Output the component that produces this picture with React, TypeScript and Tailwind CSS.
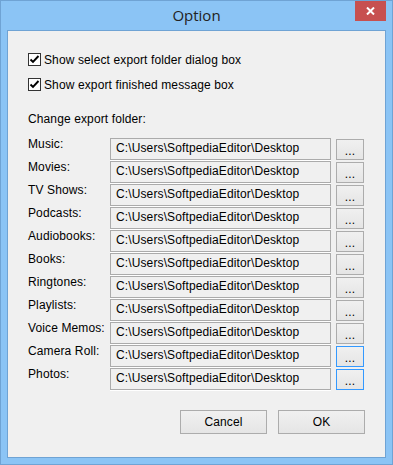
const folders = [
  'Music:',
  'Movies:',
  'TV Shows:',
  'Podcasts:',
  'Audiobooks:',
  'Books:',
  'Ringtones:',
  'Playlists:',
  'Voice Memos:',
  'Camera Roll:',
  'Photos:',
];

const path = 'C:\\Users\\SoftpediaEditor\\Desktop';

function CheckBox({ label }: { label: string }) {
  return (
    <label className="flex h-[13px] items-center">
      <span className="flex h-[13px] w-[13px] items-center justify-center border border-[#333] bg-white">
        <svg width="11" height="11" viewBox="0 0 11 11">
          <path d="M1.5 5.5 L4 8 L9.5 2" fill="none" stroke="#000" strokeWidth="1.9" />
        </svg>
      </span>
      <span className="ml-[3px] leading-[14px]">{label}</span>
    </label>
  );
}

function FolderRow({ label, focused }: { label: string; focused?: boolean }) {
  return (
    <div className="mb-[1px] flex h-[22px]">
      <div className="w-[82px] leading-[12px]">{label}</div>
      <div className="h-[22px] w-[221px] border border-[#ababab] bg-[#f0f0f0] pl-[5px] pt-[2px] leading-[14px] shadow-[0_1px_0_#fff]">
        {path}
      </div>
      <button
        type="button"
        className={`ml-[5px] mt-[1px] h-[21px] w-[28px] border bg-gradient-to-b from-[#f0f0f0] to-[#e5e5e5] pt-[3px] leading-[14px] ${
          focused ? 'border-[#3399ff]' : 'border-[#acacac]'
        }`}
      >
        ...
      </button>
    </div>
  );
}

export default function App() {
  return (
    <div className="h-[465px] w-[393px] border border-[#6fa3d4] bg-[#8bc4f5] font-['Liberation_Sans',Arial,sans-serif] text-[12px] tracking-[0.12px] text-black">
      <div className="relative h-[29px]">
        <div className="pt-[4px] text-center font-['Open_Sans','Noto_Sans',sans-serif] text-[15px] leading-[20px] tracking-normal text-[#222]">
          Option
        </div>
        <div className="absolute right-[6px] top-0 flex h-[20px] w-[31px] items-center justify-center bg-[#c75050]">
          <svg width="9" height="8" viewBox="0 0 9 8">
            <path d="M1 0.5 L8 7.5 M8 0.5 L1 7.5" stroke="#fff" strokeWidth="2" />
          </svg>
        </div>
      </div>

      <div className="mx-[6px] h-[428px] border border-[#6fa3d4] bg-[#f0f0f0] pl-[20px] pt-[22px]">
        <CheckBox label="Show select export folder dialog box" />
        <div className="mt-[12px]">
          <CheckBox label="Show export finished message box" />
        </div>
        <div className="mt-[21px] leading-[14px]">Change export folder:</div>

        <div className="mt-[12px]">
          {folders.map((f, i) => (
            <FolderRow key={f} label={f} focused={i >= 9} />
          ))}
        </div>

        <div className="mt-[20px] flex justify-end gap-[11px] pr-[20px]">
          <button
            type="button"
            className="h-[24px] w-[87px] border border-[#acacac] bg-gradient-to-b from-[#f0f0f0] to-[#e5e5e5]"
          >
            Cancel
          </button>
          <button
            type="button"
            className="h-[24px] w-[87px] border border-[#acacac] bg-gradient-to-b from-[#f0f0f0] to-[#e5e5e5]"
          >
            OK
          </button>
        </div>
      </div>
    </div>
  );
}
